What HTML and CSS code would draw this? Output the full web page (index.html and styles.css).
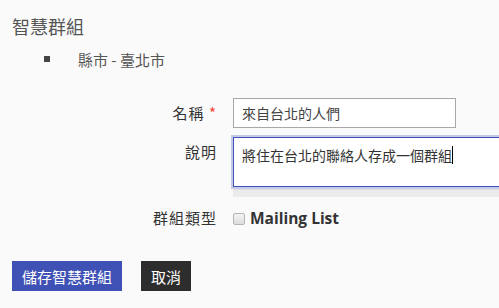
FILE: index.html
```html
<!DOCTYPE html>
<html lang="zh-Hant">
<head>
<meta charset="utf-8">
<link rel="stylesheet" href="styles.css">
</head>
<body>
<div class="page">
  <h1 class="title">智慧群組</h1>
  <ul class="criteria">
    <li class="criteria-item"><span class="bullet"></span><span class="criteria-text">縣市 - 臺北市</span></li>
  </ul>
  <form class="form">
    <div class="row row-name">
      <label class="label">名稱 <span class="req">*</span></label>
      <div class="field"><input class="input" type="text" value="來自台北的人們"></div>
    </div>
    <div class="row row-desc">
      <label class="label">說明</label>
      <div class="field field-desc">
        <div class="textarea"><span class="ta-text">將住在台北的聯絡人存成一個群組</span><span class="caret"></span></div>
        <div class="ta-bar"></div>
      </div>
    </div>
    <div class="row row-type">
      <label class="label">群組類型</label>
      <div class="field field-check"><span class="checkbox"></span><span class="check-text">Mailing List</span></div>
    </div>
    <div class="actions">
      <button type="button" class="btn btn-primary">儲存智慧群組</button>
      <button type="button" class="btn btn-dark">取消</button>
    </div>
  </form>
</div>
</body>
</html>
```

FILE: styles.css
```css
html, body {
  margin: 0;
  padding: 0;
  background: #fafafa;
  overflow: hidden;
}
body {
  font-family: "Open Sans", "Noto Sans CJK TC", sans-serif;
  color: #333;
}
.page {
  padding: 14px 0 0 12px;
}
.title {
  margin: 0;
  font-family: "Noto Sans CJK TC", sans-serif;
  font-weight: 400;
  font-size: 18px;
  line-height: 24px;
  color: #555;
}
.criteria {
  list-style: none;
  margin: 11px 0 0 0;
  padding: 0;
}
.criteria-item {
  display: flex;
  align-items: center;
  height: 20px;
  font-size: 15px;
  color: #555;
}
.bullet {
  width: 6px;
  height: 6px;
  background: #444;
  margin-left: 32px;
  margin-right: 28px;
}
.criteria-text {
  font-family: "Noto Sans CJK TC", sans-serif;
}
.form {
  margin-top: 29px;
}
.row {
  display: grid;
  grid-template-columns: 205px 1fr;
  column-gap: 16px;
}
.label {
  text-align: right;
  font-family: "Noto Sans CJK TC", sans-serif;
  font-size: 15px;
  letter-spacing: 1px;
  color: #333;
  line-height: 30px;
}
.req {
  color: #f44336;
}
.input {
  box-sizing: border-box;
  width: 223px;
  height: 30px;
  margin: 0;
  border: 1px solid #a8a8a8;
  background: #fff;
  padding: 0 8px;
  font-family: "Noto Sans CJK TC", sans-serif;
  font-size: 14px;
  color: #444;
  outline: none;
}
.row-desc {
  margin-top: 9px;
}
.field-desc {
  margin-right: -40px;
}
.textarea {
  box-sizing: border-box;
  height: 50px;
  border: 1px solid #3f51b5;
  box-shadow: 0 0 0 2px #c5cae9;
  background: #fff;
  padding: 7px 8px 0;
  font-family: "Noto Sans CJK TC", sans-serif;
  font-size: 14px;
  line-height: 20px;
  color: #333;
  display: flex;
  align-items: flex-start;
}
.caret {
  display: inline-block;
  width: 1px;
  height: 18px;
  margin-top: 1px;
  background: #000;
}
.ta-bar {
  height: 7px;
  margin-top: 2px;
  background: #ebebeb;
  border-top: 1px solid #e0e0e0;
}
.row-type {
  margin-top: 6px;
}
.field-check {
  display: flex;
  align-items: center;
  height: 30px;
}
.checkbox {
  box-sizing: border-box;
  width: 12px;
  height: 12px;
  border: 1px solid #b5b5b5;
  border-radius: 2px;
  background: linear-gradient(#f4f4f4, #dcdcdc);
  margin-right: 5px;
  margin-top: 1px;
}
.check-text {
  font-family: "Open Sans", sans-serif;
  font-weight: 700;
  font-size: 15.5px;
  color: #333;
}
.actions {
  display: flex;
  gap: 19px;
  margin-top: 28px;
}
.btn {
  height: 30px;
  border: 0;
  margin: 0;
  padding: 0;
  white-space: nowrap;
  font-family: "Noto Sans CJK TC", sans-serif;
  font-size: 15px;
  color: #fff;
  cursor: pointer;
}
.btn-primary {
  width: 110px;
  background: #3f51b5;
}
.btn-dark {
  width: 50px;
  background: #2d2d2d;
}
```
